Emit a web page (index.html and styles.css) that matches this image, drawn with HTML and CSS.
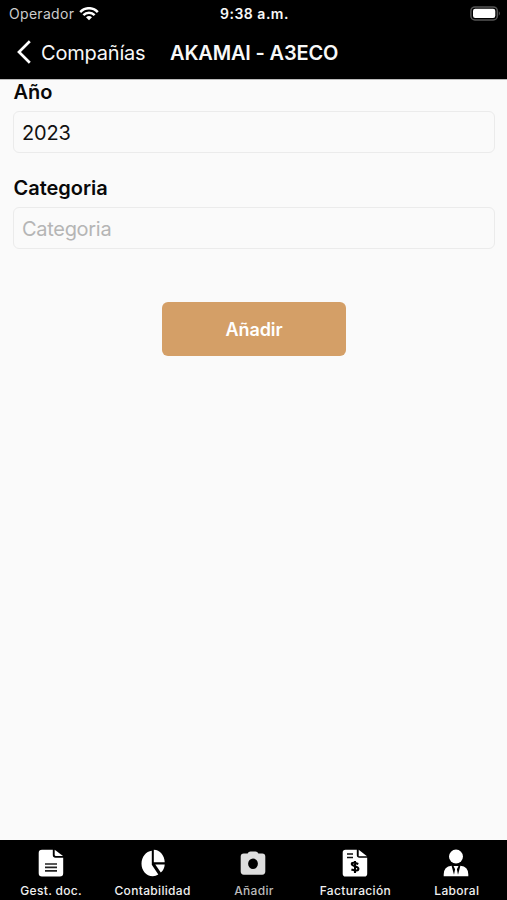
FILE: index.html
```html
<!DOCTYPE html>
<html lang="es">
<head>
<meta charset="utf-8">
<meta name="viewport" content="width=device-width">
<title>AKAMAI - A3ECO</title>
<link rel="stylesheet" href="styles.css">
</head>
<body>
<div class="app">
  <header class="header">
    <div class="status">
      <div class="carrier"><span>Operador</span>
        <svg width="20" height="14" viewBox="0 0 20 14" fill="none" stroke="#fff" stroke-width="2.5"><path d="M1.200 5.100C6-.1 14-.1 18.800 5.100"/><path d="M4.400 8.200C7.500 4.900 12.500 4.900 15.600 8.200"/><path d="M7 10.200Q10 7.800 13 10.200L10 13.300Z" fill="#fff" stroke="none"/></svg>
      </div>
      <span class="time">9:38 a.m.</span>
      <svg class="battery" width="32" height="15" viewBox="0 0 32 15"><rect x=".9" y=".9" width="26.4" height="13" rx="4" fill="#000" stroke="#555" stroke-width="1.5"/><rect x="3" y="2.8" width="22.3" height="9.2" rx="2.2" fill="#fff"/><path d="M28.800 5.200Q31 7.400 28.800 9.700Z" fill="#555"/></svg>
    </div>
    <nav class="titlebar">
      <svg width="14" height="24" viewBox="0 0 14 24" fill="none" stroke="#fff" stroke-width="2.7"><path d="M12.800 1.200L2 12L12.800 22.800"/></svg>
      <span class="back">Compañías</span>
      <h1 class="title">AKAMAI - A3ECO</h1>
    </nav>
  </header>
  <main class="form">
    <label class="label" for="year">Año</label>
    <input class="field" id="year" value="2023">
    <label class="label label-category" for="category">Categoria</label>
    <input class="field" id="category" placeholder="Categoria">
    <button class="submit" type="button">Añadir</button>
  </main>
  <nav class="tabs">
    <div class="tab"><svg class="icon" viewBox="0 0 28 28"><path fill="#fff" d="M5 .7h10.800V6q0 2.700 2.700 2.700h7.700v15.500q0 3.300-3.300 3.300H5q-3.300 0-3.300-3.300V4Q1.700.7 5 .7Z"/><path fill="#fff" d="M17.700.7l8.300 6.300h-7q-1.300 0-1.300-1.300Z"/><path stroke="#222" stroke-width="1.700" d="M8 15h12M8 18.400h12M8 21.800h12"/></svg><span class="caption">Gest. doc.</span></div>
    <div class="tab"><svg class="icon icon-pie" viewBox="0 0 28 28" fill="#fff"><path d="M12.800 1.800v14l6.500 9.600q-2.500 1.800-5.500 1.800C7 27.200 2.500 21.500 2.500 14.800S7 2.300 12.800 1.800Z"/><path d="M14.800.8C21 1 25.500 6.600 25.700 13.300H14.800Z"/><path d="M16.300 15.400h9.400q-.3 5-3.900 8.100Z"/></svg><span class="caption">Contabilidad</span></div>
    <div class="tab tab-add"><svg class="icon" viewBox="0 0 28 28"><path fill="#ddd" fill-rule="evenodd" d="M8.600 4.500Q9.500 2.400 11.500 2.400h5q2 0 2.900 2.100h3.800q3.100 0 3.100 3.100v15q0 3.100-3.100 3.100H4.800q-3.100 0-3.100-3.100v-15q0-3.100 3.100-3.100ZM14 9.600a4.900 5.200 0 1 0 0 10.400 4.900 5.200 0 0 0 0-10.400Z"/></svg><span class="caption">Añadir</span></div>
    <div class="tab"><svg class="icon" viewBox="0 0 28 28"><path fill="#fff" d="M4.500.7h11.300V6q0 2.700 2.700 2.700h7.700v16q0 2.800-2.800 2.800H4.500q-2.800 0-2.800-2.800V3.500Q1.700.7 4.500.7ZM17.700.7l8.300 6.600h-8.300Z"/><path stroke="#111" stroke-width="1.500" d="M6 5h6M6 8.600h6"/><path fill="none" stroke="#000" stroke-width="2.100" d="M17.300 15q-6.500-2.500-6.500 0c0 2.700 6.600 1.700 6.600 4.800q0 3-7 .6M14 12v12"/></svg><span class="caption">Facturación</span></div>
    <div class="tab"><svg class="icon" viewBox="0 0 28 28" fill="#fff"><circle cx="14" cy="7.600" r="7"/><path d="M1.700 27.300v-2q0-7.700 7.900-8.600l2.400 9.100 1.100-5.500-1.600-3.300h5l-1.600 3.300 1.100 5.500 2.400-9.100q7.900.9 7.900 8.600v2Z"/></svg><span class="caption">Laboral</span></div>
  </nav>
</div>
</body>
</html>
```
FILE: styles.css
```css
* { box-sizing: border-box; }
body { margin: 0; font-family: Inter, "Liberation Sans", sans-serif; background: #fafafa; }
.app { display: flex; flex-direction: column; height: 900px; overflow: hidden; }
.header { flex: 0 0 79px; background: #000; color: #f8f8f8; }
.status { display: grid; grid-template-columns: 1fr auto 1fr; height: 27px; align-items: center; padding: 0 5px 0 9px; }
.carrier { display: flex; align-items: center; gap: 5px; font-size: 14px; letter-spacing: .3px; color: #ccc; }
.time { margin-left: -2px; font-size: 14px; font-weight: 600; letter-spacing: .5px; }
.battery { justify-self: end; }
.titlebar { display: flex; align-items: center; height: 50px; padding-left: 17px; }
.back, .title { padding-top: 1px; }
.back { width: 105px; margin-left: 10px; font-size: 20px; letter-spacing: -.2px; white-space: nowrap; }
.title { margin: 0 0 0 24px; font-size: 20px; font-weight: 600; letter-spacing: -.17px; white-space: nowrap; }
.form { flex: 1; display: flex; flex-direction: column; padding: 0 12px 0 13px; border-top: 1px solid #bbb; }
.label { height: 26px; padding-left: .5px; font-size: 20px; line-height: 26px; font-weight: 600; letter-spacing: -.03px; color: #090909; }
.label:first-child { height: 25px; line-height: 24px; }
.label-category { margin-top: 22px; }
.field { width: 100%; height: 42px; margin: 6px 0 0; padding: 2px 8px 0; border: 1px solid #ebebeb; border-radius: 6px; background: transparent; font: 20px Inter, sans-serif; letter-spacing: -.2px; color: #111; outline: 0; }
.field::placeholder { color: #b5b5b5; opacity: 1; letter-spacing: -.3px; }
.submit { align-self: center; width: 184px; height: 54px; margin: 53px 0 0; border: 0; border-radius: 6px; background: #d49f67; color: #fff; font: 600 18px Inter, sans-serif; letter-spacing: -.1px; }
.tabs { flex: 0 0 60px; display: grid; grid-template-columns: repeat(5, 1fr); background: #000; color: #f0f0f0; }
.tab { display: flex; flex-direction: column; align-items: center; padding-top: 9px; }
.icon { width: 28px; height: 28px; }
.icon-pie { margin-left: 2px; }
.caption { margin-top: 6px; padding-left: 1px; font-size: 12px; line-height: 16px; font-weight: 500; letter-spacing: .33px; white-space: nowrap; }
.tab-add { color: #bbb; }
```
